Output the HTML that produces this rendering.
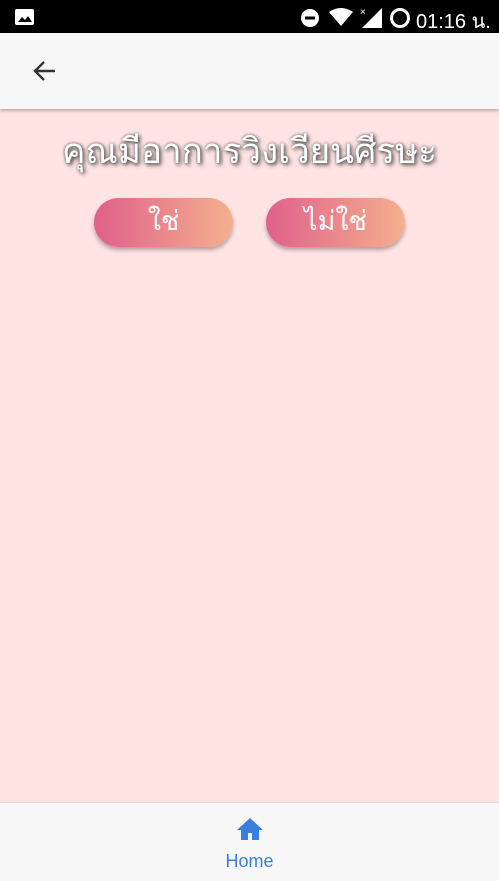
<!DOCTYPE html>
<html><head><meta charset="utf-8"><style>
body{margin:0;width:499px;height:880px;position:relative;overflow:hidden;background:#ffe4e3;font-family:"Liberation Sans","Noto Sans CJK SC",sans-serif}
.sb{position:absolute;top:0;left:0;width:499px;height:33px;background:#000;color:#fff}
.tb{position:absolute;top:33px;left:0;width:499px;height:76px;background:#f7f7f7;box-shadow:0 2px 3px rgba(0,0,0,.25)}
.title{position:absolute;top:124px;left:0;width:499px;text-align:center;font-size:35px;color:#fff;text-shadow:0 0 3px #555,2px 2px 4px #444}
.btn{position:absolute;top:198px;width:139px;height:49px;border-radius:25px;background:linear-gradient(90deg,#e0608a,#f4b08e);box-shadow:0 3px 4px rgba(0,0,0,.3);color:#fff;font-size:27px;text-align:center;line-height:47px}
.bb{position:absolute;top:802px;left:0;width:499px;height:78px;background:#f7f7f7;border-top:1px solid #ddd}
</style></head><body>
<div class="sb">
<svg style="position:absolute;left:15px;top:9px" width="19" height="16"><rect width="19" height="16" rx="2" fill="#fff"/><path d="M3 13l4-5 3 3 3-4 4 6z" fill="#000"/></svg>
<svg style="position:absolute;left:300px;top:8px" width="20" height="20"><circle cx="10" cy="10" r="9" fill="#fff"/><rect x="5" y="8.5" width="10" height="3" fill="#000"/></svg>
<svg style="position:absolute;left:329px;top:8px" width="24" height="18"><path d="M0 4Q12-4 24 4L12 18z" fill="#fff"/></svg>
<svg style="position:absolute;left:360px;top:6px" width="22" height="22"><path d="M22 2V22H2z" fill="#fff"/><text x="0" y="9" font-size="10" fill="#fff">×</text></svg>
<svg style="position:absolute;left:389px;top:7px" width="22" height="22"><circle cx="11" cy="11" r="8.5" fill="none" stroke="#fff" stroke-width="3"/></svg>
<div style="position:absolute;left:416px;top:5px;font-size:20px">01:16 น.</div>
</div>
<div class="tb"><svg style="position:absolute;left:31px;top:26px" width="26" height="24"><path d="M24 12H4M13 3L4 12l9 9" stroke="#333" stroke-width="2.4" fill="none"/></svg></div>
<div class="title">คุณมีอาการวิงเวียนศีรษะ</div>
<div class="btn" style="left:94px">ใช่</div>
<div class="btn" style="left:266px">ไม่ใช่</div>
<div class="bb">
<svg style="position:absolute;left:235px;top:13px" width="30" height="26"><path d="M15 2L2 14h4v10h7v-7h4v7h7V14h4z" fill="#3a7fe0"/></svg>
<div style="position:absolute;top:48px;width:499px;text-align:center;color:#3a7fe0;font-size:18px">Home</div>
</div>
</body></html>
